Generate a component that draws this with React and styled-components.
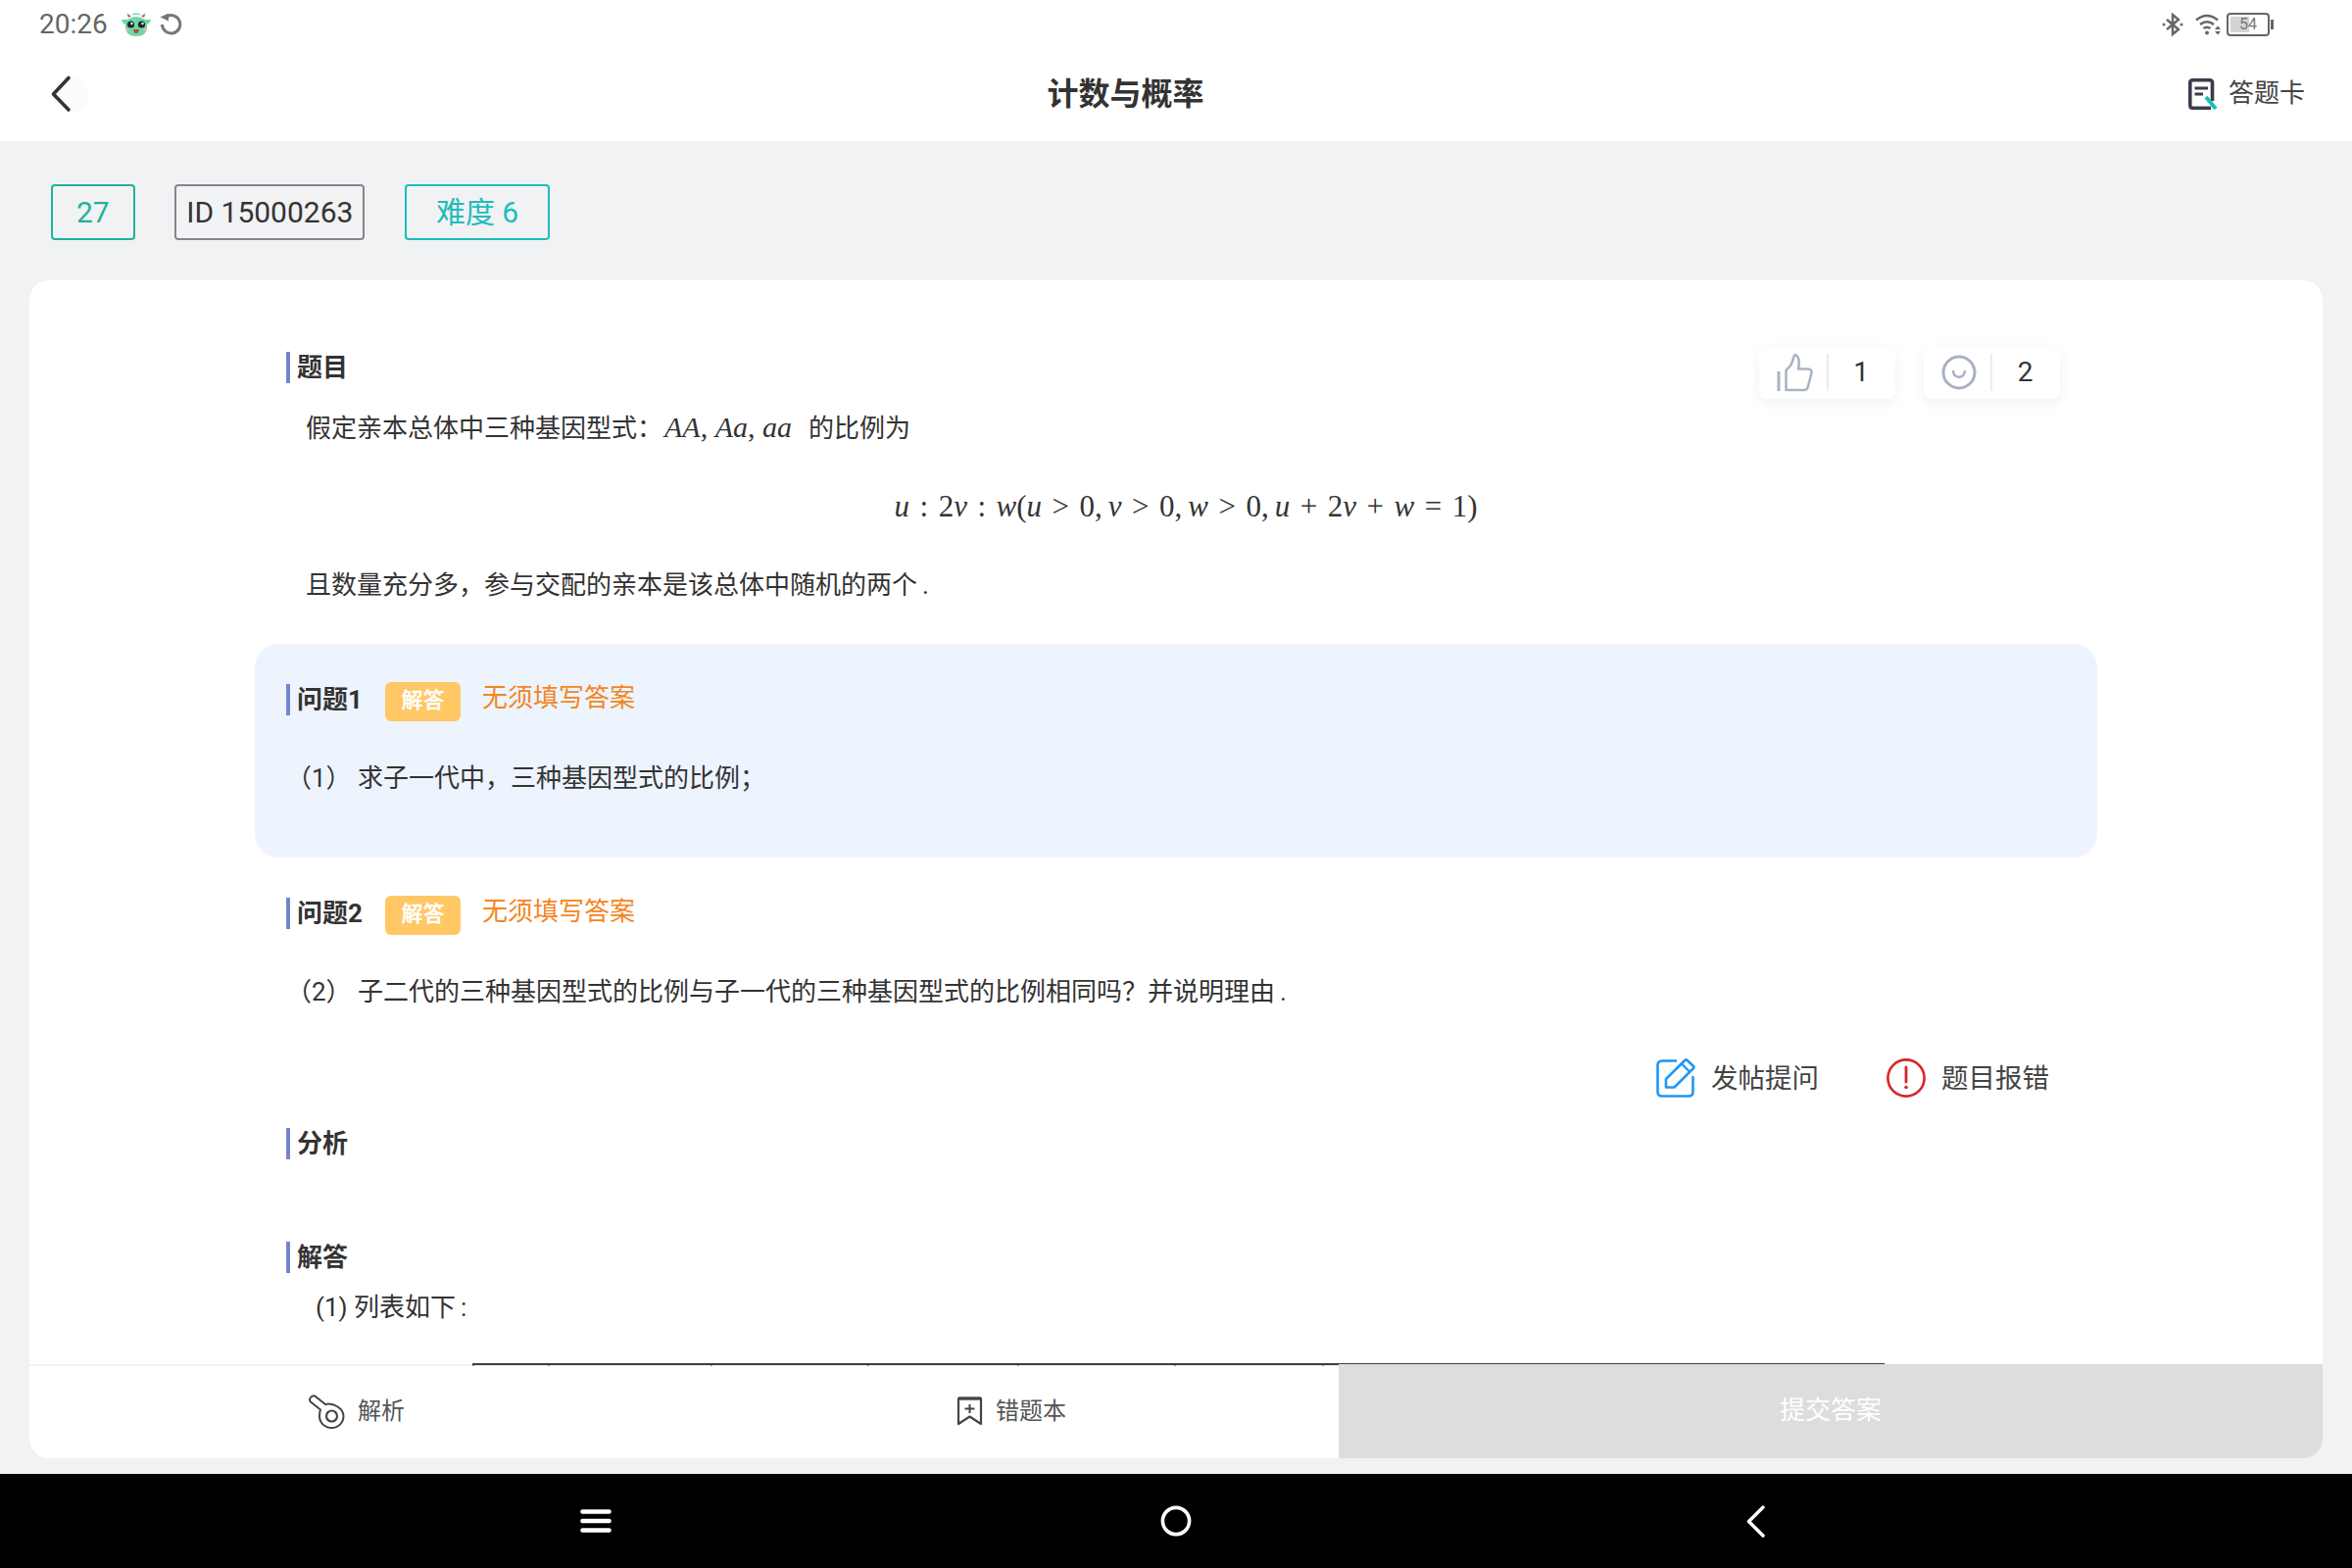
import React from 'react';
import styled, { createGlobalStyle } from 'styled-components';

const GlobalStyle = createGlobalStyle`
  html, body {
    margin: 0;
    padding: 0;
    background: #fff;
  }
  * {
    box-sizing: border-box;
  }
  body {
    font-family: Roboto, "Noto Sans CJK SC", sans-serif;
    line-height: 1.2;
    color: #333;
  }
`;

const tableCells = [77, 166, 160, 153, 160, 151, 574];

const MascotIcon = () => (
  <svg width="30" height="24" viewBox="0 0 30 24">
    <path d="M7 5 L5.5 0.5 L10 3.5 Z" fill="#a9704f" />
    <path d="M23 5 L24.5 0.5 L20 3.5 Z" fill="#a9704f" />
    <path d="M11 2 Q15 0 19 2" stroke="#7edcb8" strokeWidth="1.5" fill="none" />
    <path d="M0 7 L6 7 Q15 1 24 7 L30 7 Q29 11 26 12 Q27 24 15 24 Q3 24 4 12 Q1 11 0 7 Z" fill="#6fd6ab" />
    <circle cx="9.5" cy="12" r="3.6" fill="#1d2a26" />
    <circle cx="20.5" cy="12" r="3.6" fill="#1d2a26" />
    <circle cx="10.5" cy="11" r="1.2" fill="#fff" />
    <circle cx="21.5" cy="11" r="1.2" fill="#fff" />
    <path d="M12 17 H18 Q17.5 21 15 21 Q12.5 21 12 17 Z" fill="#c8442f" />
    <circle cx="6" cy="17" r="1.5" fill="#f2b9a0" />
    <circle cx="24" cy="17" r="1.5" fill="#f2b9a0" />
  </svg>
);

const RefreshIcon = () => (
  <svg width="25" height="22" viewBox="0 0 25 22">
    <path d="M8.5 2.6 A9.2 9.2 0 1 1 3.4 11" stroke="#777" strokeWidth="3" fill="none" />
    <path d="M10 -0.5 V7.5 L1.5 3.5 Z" fill="#777" />
  </svg>
);

const BluetoothIcon = () => (
  <svg width="22" height="24" viewBox="0 0 22 24">
    <path d="M5 7 L17 17 L11 22 V2 L17 7 L5 17" stroke="#666" strokeWidth="2.4" fill="none" />
    <circle cx="2" cy="12" r="1.5" fill="#666" />
    <circle cx="20" cy="12" r="1.5" fill="#666" />
  </svg>
);

const WifiIcon = () => (
  <svg width="27" height="22" viewBox="0 0 27 22">
    <g stroke="#666" strokeWidth="2.6" fill="none">
      <path d="M1 6.5 Q12 -2.5 23 6.5" />
      <path d="M5 11 Q12 5.5 19 11" />
      <path d="M8.5 15 Q12 12.5 15.5 15" />
    </g>
    <circle cx="12" cy="19.5" r="2" fill="#666" />
    <path d="M20 16 L23 12.5 L26 16 Z M20 18 L23 21.5 L26 18 Z" fill="#666" />
  </svg>
);

const BackIcon = () => (
  <svg width="40" height="40" viewBox="0 0 40 40">
    <circle cx="20" cy="20" r="19" fill="#fcfcfc" />
    <path d="M18 3.5 L2.5 20 L18 36" stroke="#333" strokeWidth="3.6" strokeLinecap="round" strokeLinejoin="round" fill="none" />
  </svg>
);

const AnswerCardIcon = () => (
  <svg width="31" height="32" viewBox="0 0 31 32">
    <path d="M24.5 23 V4.5 Q24.5 1.8 21.8 1.8 H4.5 Q1.8 1.8 1.8 4.5 V27.5 Q1.8 30.2 4.5 30.2 H23" stroke="#3c3c4e" strokeWidth="3.6" fill="none" />
    <path d="M6.5 10 H20 M6.5 16 H15" stroke="#3c3c4e" strokeWidth="3" fill="none" />
    <path d="M18 19 L28 31" stroke="#1dbdb9" strokeWidth="4" fill="none" />
  </svg>
);

const ThumbIcon = () => (
  <svg width="37" height="39" viewBox="0 0 37 39">
    <path d="M2 18 V38" stroke="#a9b2c3" strokeWidth="3" fill="none" />
    <path d="M9.5 37 V17 L14 12 C16 9 17 4 18 1.5 C20 0.5 22 3 22.5 6 C23 10 22.5 13 22 15.5 H32 C34.5 15.5 36 17.5 35.5 19.5 L32 33 C31.5 35.5 30 37 28 37 Z" stroke="#a9b2c3" strokeWidth="2.5" strokeLinejoin="round" fill="none" />
  </svg>
);

const SmileIcon = () => (
  <svg width="36" height="36" viewBox="0 0 36 36">
    <circle cx="18" cy="18" r="16" stroke="#a9b2c3" strokeWidth="3" fill="none" />
    <path d="M12 16 C12 25 24 25 24 16" stroke="#a9b2c3" strokeWidth="2.6" fill="none" />
  </svg>
);

const EditIcon = () => (
  <svg width="40" height="40" viewBox="0 0 40 40">
    <path d="M21 2.5 H6 Q1.5 2.5 1.5 7 V34 Q1.5 38.5 6 38.5 H33 Q37.5 38.5 37.5 34 V18" stroke="#2196f3" strokeWidth="2.6" fill="none" />
    <path d="M10 21 L29.5 1.8 Q30.5 1 31.5 1.8 L38 8 Q39 9 38 10 L18.5 29.5 H10 Z" stroke="#2196f3" strokeWidth="2.6" strokeLinejoin="round" fill="none" />
    <path d="M26 5.5 L34 13.5" stroke="#2196f3" strokeWidth="2.4" fill="none" />
  </svg>
);

const AlertIcon = () => (
  <svg width="40" height="40" viewBox="0 0 40 40">
    <circle cx="20" cy="20" r="18.6" stroke="#d62728" strokeWidth="2.6" fill="none" />
    <path d="M20 9 V24" stroke="#d62728" strokeWidth="2.8" strokeLinecap="round" fill="none" />
    <circle cx="20" cy="29.5" r="1.8" fill="#d62728" />
  </svg>
);

const AnalysisIcon = () => (
  <svg width="37" height="35" viewBox="0 0 37 35">
    <path d="M7 2 L17 10 C25 8 35.5 14 35.5 22 C35.5 29 30 34 23.5 34 C16.5 34 11 29 11 22 C11 19.5 11.2 17.5 12 15.5 L2 7.5 C0.5 6 0.8 3.8 2.5 2.5 C4 1 5.8 1 7 2 Z" stroke="#444" strokeWidth="2" strokeLinejoin="round" fill="none" />
    <circle cx="23.5" cy="22" r="5.5" stroke="#444" strokeWidth="2.2" fill="none" />
  </svg>
);

const WrongBookIcon = () => (
  <svg width="27" height="30" viewBox="0 0 27 30">
    <path d="M2 2 H25 V28 L13.5 20.5 L2 28 Z" stroke="#444" strokeWidth="2.2" strokeLinejoin="round" fill="none" />
    <path d="M2 2 H25" stroke="#444" strokeWidth="3.4" fill="none" />
    <path d="M13.5 8 V17 M8.5 12.5 H18.5" stroke="#444" strokeWidth="2" fill="none" />
  </svg>
);

const MenuIcon = () => (
  <svg width="32" height="24" viewBox="0 0 32 24">
    <path d="M2.5 2.5 H29.5 M2.5 12 H29.5 M2.5 21.5 H29.5" stroke="#fff" strokeWidth="4.6" strokeLinecap="round" fill="none" />
  </svg>
);

const HomeIcon = () => (
  <svg width="32" height="32" viewBox="0 0 32 32">
    <circle cx="16" cy="16" r="13.6" stroke="#fff" strokeWidth="3.6" fill="none" />
  </svg>
);

const ReturnIcon = () => (
  <svg width="20" height="33" viewBox="0 0 20 33">
    <path d="M17 2 L2.5 16.5 L17 31" stroke="#fff" strokeWidth="3.4" strokeLinecap="round" strokeLinejoin="round" fill="none" />
  </svg>
);

const App = () => {
  return (
    <Page>
      <GlobalStyle />
      <StatusBar>
        <StatusLeft>
          <Time>20:26</Time>
          <MascotIcon />
          <RefreshIcon />
        </StatusLeft>
        <StatusRight>
          <BluetoothIcon />
          <WifiIcon />
          <Battery>
            <BatteryLevel style={{ width: '54%' }} />
            <BatteryText>54</BatteryText>
          </Battery>
        </StatusRight>
      </StatusBar>

      <NavBar>
        <BackIcon />
        <NavTitle>计数与概率</NavTitle>
        <NavAction>
          <AnswerCardIcon />
          答题卡
        </NavAction>
      </NavBar>

      <Body>
        <TagRow>
          <Tag $color="#1fb39b" $pad={24}>27</Tag>
          <Tag $color="#86868a" $text="#333" $pad={10}>ID 15000263</Tag>
          <Tag $color="#1dbdb9" $pad={30}>难度 6</Tag>
        </TagRow>

        <Card>
          <Content>
            <Block>
              <Header>
                <SectionTitle>题目</SectionTitle>
                <Reactions>
                  <Reaction>
                    <ThumbIcon />
                    <ReactionCount>1</ReactionCount>
                  </Reaction>
                  <Reaction>
                    <SmileIcon />
                    <ReactionCount>2</ReactionCount>
                  </Reaction>
                </Reactions>
              </Header>
              <Paragraph $top={25}>
                假定亲本总体中三种基因型式&#xFF1A;
                <InlineMath>
                  <i>AA</i>, <i>Aa</i>, <i>aa</i>
                </InlineMath>
                的比例为
              </Paragraph>
            </Block>

            <Formula>
              <i>u</i><Rel>:</Rel>2<i>v</i><Rel>:</Rel><i>w</i>(<i>u</i><Rel>&gt;</Rel>0,<Gap />
              <i>v</i><Rel>&gt;</Rel>0,<Gap /><i>w</i><Rel>&gt;</Rel>0,<Gap />
              <i>u</i><Rel>+</Rel>2<i>v</i><Rel>+</Rel><i>w</i><Rel>=</Rel>1)
            </Formula>

            <Block>
              <Paragraph $top={40}>且数量充分多&#xFF0C;参与交配的亲本是该总体中随机的两个<Dot>.</Dot></Paragraph>
            </Block>

            <Question $active $top={40} $bottom={61}>
              <TitleRow>
                <SectionTitle>问题1</SectionTitle>
                <TypeBadge>解答</TypeBadge>
                <Hint>无须填写答案</Hint>
              </TitleRow>
              <QuestionText>&#xFF08;1&#xFF09; 求子一代中&#xFF0C;三种基因型式的比例&#xFF1B;</QuestionText>
            </Question>

            <Question>
              <TitleRow>
                <SectionTitle>问题2</SectionTitle>
                <TypeBadge>解答</TypeBadge>
                <Hint>无须填写答案</Hint>
              </TitleRow>
              <QuestionText>&#xFF08;2&#xFF09; 子二代的三种基因型式的比例与子一代的三种基因型式的比例相同吗&#xFF1F;并说明理由<Dot>.</Dot></QuestionText>
            </Question>

            <Actions>
              <ActionItem>
                <EditIcon />
                发帖提问
              </ActionItem>
              <ActionItem>
                <AlertIcon />
                题目报错
              </ActionItem>
            </Actions>

            <Block>
              <SectionTitle $top={31}>分析</SectionTitle>
              <SectionTitle $top={84}>解答</SectionTitle>
              <AnswerLine>(1) 列表如下<Dot>:</Dot></AnswerLine>
            </Block>

            <TableEdge>
              {tableCells.map((width, i) => (
                <TableCell key={i} style={{ width }} />
              ))}
            </TableEdge>
          </Content>

          <BottomBar>
            <Tools>
              <Tool>
                <AnalysisIcon />
                解析
              </Tool>
              <Tool>
                <WrongBookIcon />
                错题本
              </Tool>
            </Tools>
            <Submit>提交答案</Submit>
          </BottomBar>
        </Card>
      </Body>

      <SystemBar>
        <SystemButton><MenuIcon /></SystemButton>
        <SystemButton><HomeIcon /></SystemButton>
        <SystemButton><ReturnIcon /></SystemButton>
      </SystemBar>
    </Page>
  );
};

export default App;

const Page = styled.div`
  width: 2400px;
  height: 1600px;
  display: flex;
  flex-direction: column;
  overflow: hidden;
  background: #fff;
`;

const StatusBar = styled.div`
  height: 48px;
  padding: 2px 80px 0 40px;
  display: flex;
  align-items: center;
  justify-content: space-between;
`;

const StatusLeft = styled.div`
  display: flex;
  align-items: center;
  gap: 8px;
`;

const Time = styled.span`
  font-size: 28px;
  color: #666;
  margin-right: 6px;
`;

const StatusRight = styled.div`
  display: flex;
  align-items: center;
  gap: 12px;
`;

const Battery = styled.div`
  position: relative;
  width: 44px;
  height: 24px;
  margin-left: -7px;
  border: 2px solid #666;
  border-radius: 4px;
  padding: 2px;
  margin-right: 4px;

  &::after {
    content: '';
    position: absolute;
    right: -6px;
    top: 5px;
    width: 3px;
    height: 10px;
    background: #666;
  }
`;

const BatteryLevel = styled.div`
  height: 100%;
  background: #d4d4d4;
`;

const BatteryText = styled.span`
  position: absolute;
  inset: 0;
  display: flex;
  align-items: center;
  justify-content: center;
  font-size: 16px;
  color: #777;
`;

const NavBar = styled.div`
  height: 96px;
  padding: 0 48px 0 52px;
  display: flex;
  align-items: center;
  justify-content: space-between;
  background: #fff;
`;

const NavTitle = styled.div`
  font-size: 32px;
  font-weight: 700;
  color: #333;
  margin-right: 28px;
`;

const NavAction = styled.div`
  display: flex;
  align-items: center;
  gap: 10px;
  font-size: 26px;
  color: #444;
`;

const Body = styled.div`
  flex: 1;
  min-height: 0;
  padding: 44px 30px 16px;
  display: flex;
  flex-direction: column;
  background: #f1f2f4;
`;

const TagRow = styled.div`
  display: flex;
  gap: 40.5px;
  margin: 0 0 41px 22px;
`;

const Tag = styled.div`
  height: 57px;
  padding: 0 ${(p) => p.$pad}px;
  display: flex;
  align-items: center;
  border: 2px solid ${(p) => p.$color};
  border-radius: 4px;
  font-size: 30px;
  color: ${(p) => p.$text || p.$color};
`;

const Card = styled.div`
  flex: 1;
  min-height: 0;
  display: flex;
  flex-direction: column;
  background: #fff;
  border-radius: 20px;
  overflow: hidden;
`;

const Content = styled.div`
  flex: 1;
  min-height: 0;
  margin-bottom: -2px;
  padding: 73px 230px 0;
  overflow: hidden;
  position: relative;
  z-index: 1;
`;

const Block = styled.div`
  padding: 0 32px;
`;

const Header = styled.div`
  height: 32px;
  display: flex;
  justify-content: space-between;
  align-items: flex-start;
`;

const SectionTitle = styled.div`
  height: 32px;
  margin-top: ${(p) => p.$top || 0}px;
  padding-left: 7px;
  border-left: 4px solid #7485cf;
  font-size: 26px;
  font-weight: 700;
  line-height: 32px;
  color: #333;
`;

const Reactions = styled.div`
  display: flex;
  gap: 29px;
  margin: -6px 6px 0 0;
`;

const Reaction = styled.div`
  width: 139px;
  height: 54px;
  display: flex;
  align-items: center;
  padding-left: 18px;
  background: #fff;
  border-radius: 8px;
  box-shadow: 0 4px 12px rgba(150, 165, 210, 0.16);
`;

const ReactionCount = styled.div`
  flex: 1;
  height: 38px;
  margin-left: 14px;
  padding-right: 2px;
  border-left: 2px solid #ececef;
  display: flex;
  align-items: center;
  justify-content: center;
  font-size: 28px;
  color: #333;
`;

const Paragraph = styled.div`
  margin-top: ${(p) => p.$top}px;
  padding-left: 20px;
  font-size: 26px;
  line-height: 40px;
  color: #333;
`;

const InlineMath = styled.span`
  margin: 0 17px 0 2px;
  font-family: "Liberation Serif", serif;
  font-size: 30px;
`;

const Dot = styled.span`
  margin-left: 5px;
`;

const Formula = styled.div`
  margin-top: 40px;
  padding-left: 20px;
  height: 40px;
  text-align: center;
  font-family: "Liberation Serif", serif;
  font-size: 31px;
  line-height: 40px;
  color: #333;
  white-space: nowrap;
`;

const Rel = styled.span`
  margin: 0 10.5px;
`;

const Gap = styled.span`
  margin-left: 6px;
`;

const Question = styled.div`
  margin-top: ${(p) => p.$top || 0}px;
  padding: 41px 32px ${(p) => p.$bottom || 0}px;
  background: ${(p) => (p.$active ? '#edf4fd' : 'transparent')};
  border-radius: 24px;
`;

const TitleRow = styled.div`
  height: 32px;
  display: flex;
  align-items: center;
`;

const TypeBadge = styled.span`
  width: 77px;
  height: 40px;
  margin: 3px 22px 0 23px;
  display: flex;
  align-items: center;
  justify-content: center;
  background: #ffc864;
  border-radius: 6px;
  font-size: 22px;
  font-weight: 700;
  color: #fff;
`;

const Hint = styled.span`
  font-size: 26px;
  padding-bottom: 2px;
  color: #f5851f;
`;

const QuestionText = styled.div`
  margin-top: 44px;
  font-size: 26px;
  line-height: 40px;
  color: #333;
`;

const Actions = styled.div`
  margin-top: 48px;
  padding-right: 49px;
  display: flex;
  justify-content: flex-end;
  gap: 69px;
`;

const ActionItem = styled.div`
  display: flex;
  align-items: center;
  gap: 16px;
  font-size: 27.5px;
  color: #444;
`;

const AnswerLine = styled.div`
  margin-top: 15px;
  padding-left: 30px;
  font-size: 26px;
  line-height: 40px;
  color: #333;
`;

const TableEdge = styled.div`
  width: fit-content;
  margin: 37px 0 0 222px;
  display: flex;
  border-top: 2px solid #3c3f46;
`;

const TableCell = styled.div`
  height: 2px;
  border-left: 2px solid #999;
`;

const BottomBar = styled.div`
  height: 96px;
  flex-shrink: 0;
  display: flex;
`;

const Tools = styled.div`
  width: 1336px;
  display: flex;
  border-top: 2px solid #eff3f7;
`;

const Tool = styled.div`
  flex: 1;
  display: flex;
  align-items: center;
  justify-content: center;
  gap: 13px;
  padding-bottom: 2px;
  font-size: 24px;
  color: #555;
`;

const Submit = styled.div`
  flex: 1;
  position: relative;
  z-index: 2;
  display: flex;
  align-items: center;
  justify-content: center;
  background: #ddd;
  font-size: 26px;
  color: #fff;
`;

const SystemBar = styled.div`
  height: 96px;
  flex-shrink: 0;
  display: flex;
  justify-content: center;
  background: #000;
`;

const SystemButton = styled.div`
  width: 592px;
  display: flex;
  align-items: center;
  justify-content: center;
`;
